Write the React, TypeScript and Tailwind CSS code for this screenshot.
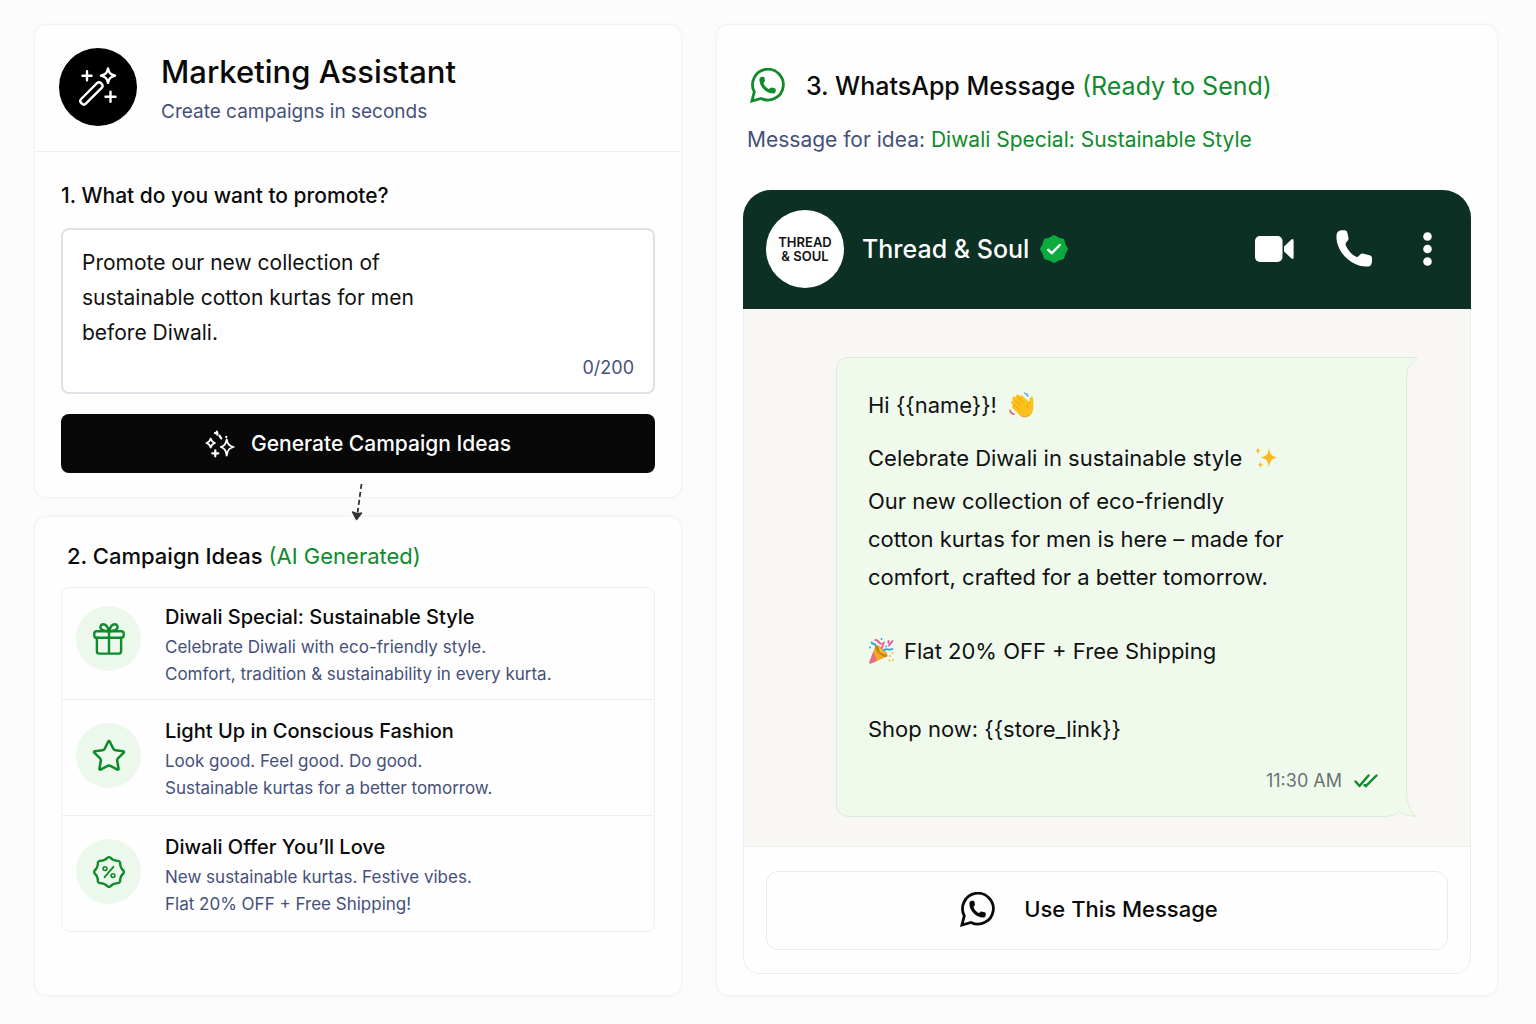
import React from "react";
import { Star } from "lucide-react";

function scallop(c: number, outer: number, inner: number, points: number) {
  const at = (r: number, a: number) =>
    `${(c + r * Math.sin(a)).toFixed(2)} ${(c - r * Math.cos(a)).toFixed(2)}`;
  const step = Math.PI / points;
  let d = "";
  for (let i = 0; i < points; i++) {
    const a = i * 2 * step;
    const w = step * 0.22;
    d += `${i === 0 ? "M" : "L"}${at(outer * 0.97, a - w)}Q${at(outer * 1.02, a)} ${at(outer * 0.97, a + w)}`;
    d += `Q${at(inner, a + step)} ${at(outer * 0.97, a + 2 * step - w)}`;
  }
  return d + "Z";
}

const HANDSET =
  "M.5 5.5C.7 2 3 .3 6 .2 9 0 10.8.3 11.2 2.2L12.6 8.6C12.8 10.600 9.500 12 9.500 14.200 10.500 18.600 16 25 20.600 27 23 27 24.200 23.400 26.600 23.600L33.600 25.200C36 25.800 36.200 27 36 30.400 35.800 34 35 36.600 31 36.600 15 37-.5 21 .5 5.500Z";

function WandIcon() {
  return (
    <svg className="size-12 text-white" viewBox="15 15 48 48" fill="none" stroke="currentColor" strokeWidth="2.4" strokeLinecap="round" strokeLinejoin="round" aria-hidden="true">
      <rect x="-14" y="-3.3" width="28" height="6.6" rx="2.8" transform="translate(32.4 45.4) rotate(-45)" />
      <path d="M49 20.500c1 4.600 2.400 6 7 7.200-4.600 1.200-6 2.600-7 7.200-1-4.600-2.400-6-7-7.200 4.600-1.200 6-2.600 7-7.200Z" />
      <path d="M28 23.200v9M23.500 27.700h9M51.500 43.700v10M46.500 48.700h10" />
    </svg>
  );
}

function SparklesIcon() {
  return (
    <svg className="h-7 w-[30px]" viewBox="0 0 30 28" fill="none" stroke="currentColor" strokeWidth="1.8" strokeLinecap="round" strokeLinejoin="round" aria-hidden="true">
      <path d="M5.700 8.500c.8 2.800 1.700 3.700 4.300 4.500-2.600.8-3.500 1.700-4.300 4.500-.8-2.800-1.700-3.700-4.300-4.500 2.600-.8 3.500-1.700 4.300-4.500Z" />
      <path d="M21.700 9.500c1 4.800 2.300 6.300 7 7.500-4.700 1.200-6 2.700-7 8.500-1-5.800-2.300-7.300-6-8.500 3.700-1.200 5-2.700 6-7.500Z" />
      <path d="M10.300 20.300v6M7.300 23.300h6M10 3.200l2.500.2M11.800 1.500l.6 3.200M14.500 5.700l1.700 2.600M21.300 6.800v.2" strokeWidth="2.200" />
    </svg>
  );
}

function GiftIcon() {
  return (
    <svg className="size-8" viewBox="0 0 32 32" fill="none" stroke="currentColor" strokeWidth="2.4" strokeLinecap="round" strokeLinejoin="round" aria-hidden="true">
      <rect x="1.300" y="8.200" width="29.400" height="6.600" rx="2.400" />
      <path d="M3.900 14.800v13.400a2.400 2.400 0 0 0 2.400 2.400h19.400a2.400 2.400 0 0 0 2.400-2.400V14.800M16 8.200v22.400" />
      <path d="M16 8.200C14.800 3.600 12.600 1.300 10.200 1.300 7.600 1.300 6.600 4.200 8 5.800c1.600 1.800 4.800 2.400 8 2.400ZM16 8.200c1.200-4.600 3.400-6.900 5.800-6.900 2.600 0 3.600 2.900 2.200 4.500-1.600 1.800-4.800 2.400-8 2.400Z" />
    </svg>
  );
}

function OfferIcon() {
  return (
    <svg className="size-[34px]" viewBox="-1 -1 34 34" fill="none" stroke="currentColor" strokeWidth="2.4" strokeLinecap="round" strokeLinejoin="round" aria-hidden="true">
      <path d={scallop(16, 15, 11.8, 8)} />
      <path d="M20.400 10.800l-8.800 10.400" strokeWidth="1.800" />
      <circle cx="12" cy="12.600" r="1.900" strokeWidth="1.600" />
      <circle cx="20" cy="19.600" r="1.900" strokeWidth="1.600" />
    </svg>
  );
}

function WhatsAppIcon({ className }: { className: string }) {
  return (
    <svg className={className} viewBox="0 0 36 36" fill="none" aria-hidden="true">
      <path d="M1.900 33 4.300 23.800A15.400 15.400 0 1 1 11 30.400Z" stroke="currentColor" strokeWidth="2.800" />
      <path d={HANDSET} transform="translate(9.200 8.600) scale(.46)" fill="currentColor" />
    </svg>
  );
}

function VerifiedIcon() {
  return (
    <svg className="size-7" viewBox="0 0 28 28" role="img" aria-label="Verified">
      <path d={scallop(14, 14, 11.900, 8)} fill="#0bab3d" />
      <path d="M8.200 14.800l3.600 3.400 8-8.200" fill="none" stroke="#fff" strokeWidth="2.400" strokeLinecap="round" strokeLinejoin="round" />
    </svg>
  );
}

function WaveEmoji() {
  return (
    <svg className="size-[26px]" viewBox="0 0 26 26" role="img" aria-label="Waving hand">
      <g stroke="#fcc21b" strokeWidth="3.800" strokeLinecap="round">
        <path d="M12.500 13.500 5.200 6.600M15 11 8.800 4.600M17 10l-4.600-4.800M11 16.500 4 10.600" />
      </g>
      <path d="M8 11 16 6.500l4.500 3.800c.4-1.600-.2-3.800 1-5 1-.9 2.400-.4 2.600 1 .3 2.400.4 6 .2 9.700-.2 5-3.300 8.700-7.500 9-3.800.3-6.400-2-8.800-4.500L3.400 16c-1.500-1.700.6-3.500 2.200-2.300Z" fill="#fcc21b" />
      <path d="M6.200 8.400l5.600 5.200M9.600 5.800l5.200 5.400M5 13l4.600 3.800M20.500 10.300c-2 1.300-2.600 3-2 5.200" fill="none" stroke="#e59600" strokeWidth=".8" strokeLinecap="round" />
      <path d="M9.500 22c4 3.600 10.500 3.600 13.200-1.500-1.600 4.500-8.700 7.500-13.200 1.500Z" fill="#f19534" />
      <path d="M15.500 1.300c1.800.2 3 1.200 3.600 2.800" fill="none" stroke="#5aa9e6" strokeWidth="1.600" strokeLinecap="round" />
      <path d="M1 18.300c.3 2 1.800 3.600 4 4" fill="none" stroke="#d9657a" strokeWidth="1.600" strokeLinecap="round" />
    </svg>
  );
}

function SparkleEmoji() {
  return (
    <svg className="size-6" viewBox="0 0 24 24" role="img" aria-label="Sparkles">
      <g fill="#fcb81b">
        <path d="M15 1.500c.9 6.600 2 8.700 8.500 10-6.500 1.300-7.600 3.400-8.500 10-.9-6.600-2-8.700-8.500-10 6.500-1.300 7.600-3.400 8.500-10Z" />
        <path d="M4 1.200c.4 2.400.8 3.100 3 3.600-2.200.5-2.600 1.200-3 3.600-.4-2.400-.8-3.100-3-3.600 2.200-.5 2.600-1.200 3-3.600ZM6.500 15.500c.4 2.100.7 2.700 2.600 3.200-1.900.5-2.200 1.100-2.600 3.200-.4-2.100-.7-2.700-2.600-3.200 1.900-.5 2.200-1.100 2.600-3.200Z" />
      </g>
    </svg>
  );
}

function PartyEmoji() {
  return (
    <svg className="size-[27px]" viewBox="0 0 27 27" role="img" aria-label="Party popper">
      <path d="M7.500 8 1.400 24c-.4 1.200.4 1.900 1.500 1.500L19 18.500Z" fill="#f5a623" />
      <path d="M5.400 13.600 1.400 24c-.4 1.200.4 1.900 1.500 1.500l6-2.600Z" fill="#e56a8c" />
      <ellipse cx="13.200" cy="13.200" rx="8" ry="3" transform="rotate(43 13.200 13.200)" fill="#c5811e" />
      <path d="M10 7.500c3.500 1.500 6.500 4.800 8.500 9.500L12 14Z" fill="#fbbf2d" />
      <g fill="none" strokeWidth="1.900" strokeLinecap="round">
        <path d="M7.500 2c3-.5 3 3.500 5.500 3.800" stroke="#ee5a9b" />
        <path d="M3.500 4.500c1 2.200 2.500.8 4 2.500" stroke="#29a3dc" />
        <path d="M13.500 10c2.500-1.500.5-4 2.500-5.500" stroke="#ee5a9b" />
        <path d="M15.500 12.500c2.500-3 5 .5 8.800-1.500" stroke="#29a3dc" />
        <path d="M21 7.500 24.500 3M20.500 3v2" stroke="#e05d9c" />
        <path d="M13.500 1v.1M2 9.500v.1M18 8.500v.1" stroke="#29a3dc" />
        <path d="M24.500 15v.1M22 18v.1M25 22v.1M21.500 22.500v.1" stroke="#f8b62d" />
      </g>
    </svg>
  );
}

const ideas = [
  {
    title: "Diwali Special: Sustainable Style",
    lines: ["Celebrate Diwali with eco-friendly style.", "Comfort, tradition & sustainability in every kurta."],
    icon: <GiftIcon />,
  },
  {
    title: "Light Up in Conscious Fashion",
    lines: ["Look good. Feel good. Do good.", "Sustainable kurtas for a better tomorrow."],
    icon: <Star className="size-9" strokeWidth={1.700} aria-hidden="true" />,
  },
  {
    title: "Diwali Offer You’ll Love",
    lines: ["New sustainable kurtas. Festive vibes.", "Flat 20% OFF + Free Shipping!"],
    icon: <OfferIcon />,
  },
];

const card = "rounded-xl border border-[#f3f3f4] bg-[#fefefe] shadow-[0_0_3px_#f3f3f4]";

function PromptCard() {
  return (
    <section className={`${card} relative`}>
      <header className="flex items-end gap-6 border-b border-[#f0f0f2] px-6 pt-[23px] pb-[25px]">
        <div className="flex size-[78px] shrink-0 items-center justify-center rounded-full bg-black">
          <WandIcon />
        </div>
        <div>
          <h1 className="text-[31px] leading-9 font-medium text-[#0a0a0a]">Marketing Assistant</h1>
          <p className="mt-2 text-[19px] leading-7 text-[#45507a]">Create campaigns in seconds</p>
        </div>
      </header>
      <div className="px-[26px] pt-7 pb-6">
        <label htmlFor="promo" className="block text-[21px] leading-8 font-medium text-[#0a0a0a]">
          1. What do you want to promote?
        </label>
        <div className="mt-4 rounded-lg border-2 border-[#dfe1e7] bg-white px-[19px] pt-[15px] pb-[7px] text-right">
          <textarea
            id="promo"
            rows={3}
            className="block w-full resize-none bg-transparent text-left text-[21px] leading-[35px] text-[#111] outline-none"
            defaultValue={"Promote our new collection of\nsustainable cotton kurtas for men\nbefore Diwali."}
          />
          <span className="block text-lg leading-[35px] text-[#45507a]">0/200</span>
        </div>
        <button type="button" className="mt-5 flex h-[59px] w-full items-center justify-center gap-4 rounded-lg bg-[#080808] text-[21px] font-medium text-white">
          <SparklesIcon />
          Generate Campaign Ideas
        </button>
      </div>
      <svg className="absolute top-full left-1/2 -mt-[14px] h-10 w-4 -translate-x-2" viewBox="0 0 16 40" fill="none" aria-hidden="true">
        <path d="M11.500 1 7.500 30" stroke="#333" strokeWidth="1.800" strokeDasharray="5 3" />
        <path d="M2.500 29 6.500 36.500 11.500 30 7.500 31Z" fill="#333" stroke="#333" strokeWidth="1.500" strokeLinejoin="round" />
      </svg>
    </section>
  );
}

function IdeasCard() {
  return (
    <section className={`${card} grow px-[26px] pt-[23px] pb-6`}>
      <h2 className="pl-[6px] text-[22px] leading-8 font-medium text-[#0a0a0a]">
        2. Campaign Ideas <span className="font-normal text-[#0f8a2c]">(AI Generated)</span>
      </h2>
      <ul className="mt-[15px] divide-y divide-[#f0f0f2] rounded-lg border border-[#f0f0f2]">
        {ideas.map((idea) => (
          <li key={idea.title} className="group flex items-start gap-6 px-[14px] pt-[15px] pb-[13px] first:pt-[13px] first:pb-[11px]">
            <div className="mt-2 flex size-[65px] shrink-0 items-center justify-center rounded-full bg-[#edf8ec] text-[#0f8a2c] group-first:mt-[5px]">
              {idea.icon}
            </div>
            <div>
              <h3 className="mb-px text-xl leading-8 font-medium text-[#0a0a0a]">{idea.title}</h3>
              {idea.lines.map((line) => (
                <p key={line} className="text-[17px] leading-[27px] text-[#45507a]">{line}</p>
              ))}
            </div>
          </li>
        ))}
      </ul>
    </section>
  );
}

function Bubble() {
  return (
    <div className="relative mr-[63px] ml-[92px] rounded-xl rounded-tr-none border border-[#dcebdc] bg-[#effaed] pt-7 pr-7 pb-4 pl-[31px] text-[22px] leading-[38px] text-[#111]">
      <svg className="absolute -top-px -right-[12px] h-7 w-[14px]" viewBox="0 0 14 28" aria-hidden="true">
        <path d="M0 0h14v28H0Z" fill="#f8f7f3" />
        <path d="M0 .5h13L4.500 10.500Q2.500 14 2.500 28H0Z" fill="#effaed" />
        <path d="M0 .5h13L4.500 10.500Q2.500 14 2.500 28" fill="none" stroke="#dcebdc" />
      </svg>
      <svg className="absolute -right-[11px] -bottom-px h-6 w-[30px]" viewBox="0 0 30 24" aria-hidden="true">
        <path d="M0 0h30v24H0Z" fill="#f8f7f3" />
        <path d="M19.500 0q0 14 9.500 23.500-8 0-17-4.500-5 4-12 4.500V0Z" fill="#effaed" />
        <path d="M19.500 0q0 14 9.500 23.500-8 0-17-4.500-5 4-12 4.500" fill="none" stroke="#dcebdc" />
      </svg>
      <p className="flex items-center gap-3">Hi {"{{name}}"}! <WaveEmoji /></p>
      <p className="mt-[15px] flex items-center gap-3">Celebrate Diwali in sustainable style <SparkleEmoji /></p>
      <p className="mt-[5px]">
        Our new collection of eco-friendly
        <br />
        cotton kurtas for men is here – made for
        <br />
        comfort, crafted for a better tomorrow.
      </p>
      <p className="mt-9 flex items-center gap-[9px]"><PartyEmoji /> Flat 20% OFF + Free Shipping</p>
      <p className="mt-10">Shop now: {"{{store_link}}"}</p>
      <p className="mt-[14px] flex items-center justify-end gap-3 text-lg leading-[38px] text-[#6b7370]">
        11:30 AM
        <svg className="h-4 w-6" viewBox="0 0 24 16" fill="none" stroke="#0f8a2c" strokeWidth="2.400" strokeLinecap="round" strokeLinejoin="round" role="img" aria-label="Read">
          <path d="M1.500 8.500 5.500 13 14.500 2.500M10.500 12l1.300 1.200L22.500 2.500" />
        </svg>
      </p>
    </div>
  );
}

function MessageCard() {
  return (
    <section className={`${card} px-[26px] pt-[41px] pb-[21px]`}>
      <h2 className="flex items-center gap-5 pl-[7px] text-[25px] leading-10 font-medium text-[#0a0a0a]">
        <WhatsAppIcon className="size-9 shrink-0 text-[#0f8a2c]" />
        <span>
          3. WhatsApp Message <span className="font-normal text-[#0f8a2c]">(Ready to Send)</span>
        </span>
      </h2>
      <p className="mt-[18px] pl-1 text-[21px] leading-8 text-[#45507a]">
        Message for idea: <span className="text-[#0f8a2c]">Diwali Special: Sustainable Style</span>
      </p>
      <div className="mt-[34px] overflow-hidden rounded-t-[28px] rounded-b-2xl">
        <header className="flex h-[119px] items-center bg-[#0c3024] px-[23px] pb-[2px] text-white">
          <div className="flex size-[78px] shrink-0 items-center justify-center rounded-full bg-white text-center text-[13px] leading-[14px] font-semibold text-[#111]">
            THREAD
            <br />
            &amp; SOUL
          </div>
          <span className="mr-[11px] ml-[18px] text-[25px] leading-8 font-medium">Thread &amp; Soul</span>
          <VerifiedIcon />
          <button type="button" aria-label="Video call" className="ml-auto">
            <svg className="h-[26px] w-[39px]" viewBox="0 0 39 26" fill="currentColor" aria-hidden="true">
              <rect width="27.500" height="26" rx="5" />
              <path d="M29 10.500 36.500 3.600Q38.600 2.200 38.600 4.800V21.200Q38.600 23.800 36.500 22.400L29 15.500Z" />
            </svg>
          </button>
          <button type="button" aria-label="Voice call" className="ml-[42px]">
            <svg className="size-[37px]" viewBox="0 0 37 37" fill="currentColor" aria-hidden="true">
              <path d={HANDSET} />
            </svg>
          </button>
          <button type="button" aria-label="More options" className="mr-4 ml-[50px]">
            <svg className="h-[34px] w-[9px]" viewBox="0 0 9 34" fill="currentColor" aria-hidden="true">
              <circle cx="4.500" cy="4.500" r="4.300" />
              <circle cx="4.500" cy="17" r="4.300" />
              <circle cx="4.500" cy="29.500" r="4.300" />
            </svg>
          </button>
        </header>
        <div className="rounded-b-2xl border border-t-0 border-[#ebeeee]">
          <div className="border-b border-[#efeeea] bg-[#f8f7f3] pt-12 pb-[29px]">
            <Bubble />
          </div>
          <div className="px-[22px] pt-6 pb-[23px]">
            <button type="button" className="flex h-[79px] w-full items-center justify-center gap-7 rounded-xl border border-[#e8ebeb] pr-9 pb-[2px] text-[22px] font-medium text-[#0a0a0a]">
              <WhatsAppIcon className="size-9" />
              Use This Message
            </button>
          </div>
        </div>
      </div>
    </section>
  );
}

export default function App() {
  return (
    <main className="grid min-h-screen grid-cols-[648fr_782fr] gap-[34px] bg-[#fcfcfc] pt-6 pr-[38px] pb-7 pl-[34px] font-['Inter',sans-serif]">
      <div className="flex flex-col gap-[18px]">
        <PromptCard />
        <IdeasCard />
      </div>
      <MessageCard />
    </main>
  );
}
